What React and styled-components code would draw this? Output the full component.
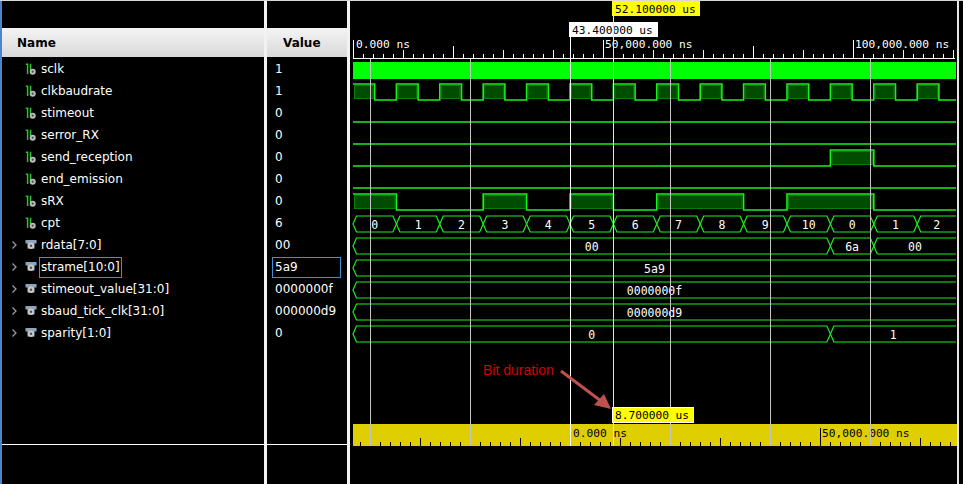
import React from 'react';
import styled, { createGlobalStyle } from 'styled-components';

const GlobalStyle = createGlobalStyle`
  html, body {
    margin: 0;
    padding: 0;
    background: #000;
  }
`;

const Page = styled.div`
  display: flex;
  width: 963px;
  height: 484px;
  background: #000;
  border-top: 1px solid #d8d8d8;
  box-sizing: border-box;
  overflow: hidden;
  font-family: "DejaVu Sans", sans-serif;
  font-size: 12px;
  color: #fff;
`;

const Column = styled.div`
  display: flex;
  flex-direction: column;
  width: ${p => p.$width}px;
  flex: none;
  box-sizing: border-box;
  border-left: ${p => (p.$edge ? '2px solid #4a86c8' : 'none')};
`;

const Divider = styled.div`
  width: ${p => p.$width}px;
  flex: none;
  background: #f2f2f2;
`;

const TopGap = styled.div`
  height: 27px;
  flex: none;
`;

const Header = styled.div`
  height: 29px;
  flex: none;
  display: flex;
  align-items: center;
  padding-left: ${p => p.$pad}px;
  background: linear-gradient(#f4f4f4, #d9d9d9);
  color: #000;
  font-weight: bold;
  font-size: 12px;
`;

const Rows = styled.div`
  flex: 1;
  padding-top: 1px;
`;

const Footer = styled.div`
  height: 39px;
  flex: none;
  border-top: 1px solid #fff;
`;

const NameRow = styled.div`
  height: 22px;
  display: flex;
  align-items: center;
  padding-left: 9px;
`;

const Chevron = styled.span`
  width: 14px;
  flex: none;
  display: flex;
  align-items: center;
`;

const IconBox = styled.span`
  width: 15px;
  flex: none;
  display: flex;
  align-items: center;
`;

const Label = styled.span`
  height: 21px;
  line-height: 19px;
  box-sizing: border-box;
  padding: 0 1px;
  margin-left: -1px;
  border: 1px solid ${p => (p.$selected ? '#3f8ed6' : 'transparent')};
  white-space: nowrap;
`;

const ValueRow = styled.div`
  height: 22px;
  display: flex;
  align-items: center;
  padding: 0 6px 0 5px;
`;

const ValueText = styled.span`
  flex: 1;
  height: 21px;
  line-height: 19px;
  box-sizing: border-box;
  padding-left: 2px;
  border: 1px solid ${p => (p.$selected ? '#3f8ed6' : 'transparent')};
`;

const WavePanel = styled.div`
  flex: 1;
  position: relative;
`;

const signals = [
  { name: 'sclk', value: '1' },
  { name: 'clkbaudrate', value: '1' },
  { name: 'stimeout', value: '0' },
  { name: 'serror_RX', value: '0' },
  { name: 'send_reception', value: '0' },
  { name: 'end_emission', value: '0' },
  { name: 'sRX', value: '0' },
  { name: 'cpt', value: '6' },
  { name: 'rdata[7:0]', value: '00', bus: true },
  { name: 'strame[10:0]', value: '5a9', bus: true, selected: true },
  { name: 'stimeout_value[31:0]', value: '0000000f', bus: true },
  { name: 'sbaud_tick_clk[31:0]', value: '000000d9', bus: true },
  { name: 'sparity[1:0]', value: '0', bus: true },
];

function BitIcon() {
  return (
    <svg width="11" height="12" viewBox="0 0 11 12">
      <path d="M0.8 1.2 H2.6 V11 M5.6 0.8 V7" stroke="#2fc22f" strokeWidth="1.5" fill="none" />
      <circle cx="7.7" cy="8.7" r="3" fill="#bdbdbd" />
      <circle cx="7.7" cy="8.7" r="1.1" fill="#4a4a4a" />
    </svg>
  );
}

function BusIcon() {
  return (
    <svg width="12" height="12" viewBox="0 0 12 12">
      <path d="M0.5 1 H11.5 V4.5 H9.5 V9.5 H2.5 V4.5 H0.5 Z" fill="#8ea4ba" />
      <circle cx="6" cy="6.8" r="3.2" fill="#c8c8c8" />
      <circle cx="6" cy="6.8" r="1.2" fill="#505050" />
    </svg>
  );
}

function Arrow() {
  return (
    <svg width="7" height="10" viewBox="0 0 7 10">
      <path d="M1.5 1.5 L5 5 L1.5 8.5" stroke="#9a9a9a" strokeWidth="1.3" fill="none" />
    </svg>
  );
}

// waveform geometry, in page pixels
const X0 = 353;
const XE = 956;
const P = 43.4;
const ROW0 = 57;
const edge = k => X0 + k * P;
const GREEN = '#1cf01c';
const MONO = '"DejaVu Sans Mono", monospace';

function Scalar({ row, highs }) {
  const top = ROW0 + row * 22 + 4;
  const low = top + 16;
  let d = '';
  const segs = highs.map(([a, b]) => [edge(a), Math.min(edge(b), XE)]);
  segs.forEach(([a, b], i) => {
    if (i === 0 && a <= X0) {
      d = `M${X0} ${top}`;
    } else {
      if (!d) d = `M${X0} ${low}`;
      d += ` H${a} V${top}`;
    }
    d += ` H${b} V${low}`;
  });
  if (!d) d = `M${X0} ${low}`;
  d += ` H${XE}`;
  return (
    <g>
      {segs.map(([a, b], i) => (
        <rect key={i} x={a + 1.5} y={top + 1.5} width={b - a - 3} height={low - top - 3}
          fill="#004d00" stroke="#0b7d0b" strokeWidth="1" />
      ))}
      <path d={d} stroke={GREEN} strokeWidth="1.6" fill="none" />
    </g>
  );
}

function Bus({ row, segs }) {
  const top = ROW0 + row * 22 + 4;
  const bot = top + 16;
  const mid = (top + bot) / 2;
  const s = 3.5;
  return (
    <g>
      {segs.map(([a, b, v], i) => {
        const xa = edge(a);
        const open = b === null;
        const xb = open ? XE : edge(b);
        const pts = open
          ? `M${XE} ${top} H${xa + s} L${xa} ${mid} L${xa + s} ${bot} H${XE}`
          : `M${xa} ${mid} L${xa + s} ${top} H${xb - s} L${xb} ${mid} L${xb - s} ${bot} H${xa + s} Z`;
        return (
          <g key={i}>
            <path d={pts} stroke={GREEN} strokeWidth="1.2" fill="none" />
            <text x={(xa + xb) / 2} y={top + 12.5} fill="#fff" fontFamily={MONO} fontSize="11.5" textAnchor="middle">{v}</text>
          </g>
        );
      })}
    </g>
  );
}

function Waves() {
  const topTicks = [];
  for (let k = 0; k <= 60; k++) {
    const x = X0 + k * 10;
    let h = 4;
    if (k % 25 === 0) h = 18;
    else if (x === 453 || x === 753) h = 12;
    else if (k % 5 === 0) h = 8;
    topTicks.push(<line key={k} x1={x + 0.5} x2={x + 0.5} y1={57 - h} y2={57} stroke="#fff" strokeWidth="1" />);
  }
  const botTicks = [];
  for (let x = 360; x <= 950; x += 10) {
    const r = x - 570;
    let h = 4;
    if (r % 250 === 0) h = 18;
    else if (r % 50 === 0) h = 8;
    botTicks.push(<line key={x} x1={x + 0.5} x2={x + 0.5} y1={445 - h} y2={445} stroke="#000" strokeWidth="1" />);
  }
  const cptVals = ['0', '1', '2', '3', '4', '5', '6', '7', '8', '9', '10', '0', '1', '2'];
  const cptSegs = cptVals.map((v, i) => [i, i === 13 ? null : i + 1, v]);
  const grid = [370, 470, 670, 770, 870];
  return (
    <svg width="613" height="483" viewBox="350 0 613 483" style={{ display: 'block' }}>
      {/* top ruler */}
      <rect x="612" y="0" width="88" height="15" fill="#ffff00" />
      <text x="615" y="12" fontFamily={MONO} fontSize="11.2" fill="#000">52.100000 us</text>
      <rect x="569" y="21" width="89" height="15" fill="#fff" />
      <text x="572" y="33" fontFamily={MONO} fontSize="11.2" fill="#000">43.400000 us</text>
      <text x="356" y="47" fontFamily={MONO} fontSize="11.2" fill="#fff">0.000 ns</text>
      <text x="605" y="47" fontFamily={MONO} fontSize="11.2" fill="#fff">50,000.000 ns</text>
      <text x="855" y="47" fontFamily={MONO} fontSize="11.2" fill="#fff">100,000.000 ns</text>
      <line x1={X0} x2="955" y1="57.5" y2="57.5" stroke="#fff" strokeWidth="1" />
      {topTicks}

      {/* signals */}
      <rect x={X0} y="61" width={XE - X0} height="17" fill="#00ff00" />
      <Scalar row={1} highs={Array.from({ length: 14 }, (_, i) => [i, i + 0.5])} />
      <Scalar row={2} highs={[]} />
      <Scalar row={3} highs={[]} />
      <Scalar row={4} highs={[[11, 12]]} />
      <Scalar row={5} highs={[]} />
      <Scalar row={6} highs={[[0, 1], [3, 4], [5, 6], [7, 9], [10, 12]]} />
      <Bus row={7} segs={cptSegs} />
      <Bus row={8} segs={[[0, 11, '00'], [11, 12, '6a'], [12, null, '00']]} />
      <Bus row={9} segs={[[0, null, '5a9']]} />
      <Bus row={10} segs={[[0, null, '0000000f']]} />
      <Bus row={11} segs={[[0, null, '000000d9']]} />
      <Bus row={12} segs={[[0, 11, '0'], [11, null, '1']]} />

      {/* bottom ruler */}
      <rect x={X0} y="423" width={957 - X0} height="22" fill="#dfcf00" />
      {botTicks}
      <text x="573" y="436" fontFamily={MONO} fontSize="11.2" fill="#000">0.000 ns</text>
      <text x="822" y="436" fontFamily={MONO} fontSize="11.2" fill="#000">50,000.000 ns</text>

      {/* grid and cursors */}
      {grid.map(x => (
        <line key={x} x1={x + 0.5} x2={x + 0.5} y1="58" y2="445" stroke="#c4c4c4" strokeWidth="1" />
      ))}
      <line x1="570.5" x2="570.5" y1="36" y2="445" stroke="#fff" strokeWidth="1" />
      <line x1="613.5" x2="613.5" y1="15" y2="445" stroke="#ffff00" strokeWidth="1" />

      {/* annotation */}
      <text x="483" y="374" fontFamily={'"Liberation Sans", Arial, sans-serif'} fontSize="14" fill="#d40000">Bit duration</text>
      <line x1="561" y1="370" x2="601" y2="400" stroke="#c0504d" strokeWidth="3" />
      <path d="M611 408 L594 404 L604 393 Z" fill="#c0504d" />
      <rect x="612.5" y="406.5" width="81" height="15" fill="#ffff00" stroke="#fff" strokeWidth="1" />
      <text x="615" y="418" fontFamily={MONO} fontSize="11.2" fill="#000">8.700000 us</text>

      <line x1="958" x2="958" y1="0" y2="483" stroke="#e6e6e6" strokeWidth="2" />
    </svg>
  );
}

export default function App() {
  return (
    <>
      <GlobalStyle />
      <Page>
        <Column $width={264} $edge>
          <TopGap />
          <Header $pad={15}>Name</Header>
          <Rows>
            {signals.map(s => (
              <NameRow key={s.name}>
                <Chevron>{s.bus && <Arrow />}</Chevron>
                <IconBox>{s.bus ? <BusIcon /> : <BitIcon />}</IconBox>
                <Label $selected={s.selected}>{s.name}</Label>
              </NameRow>
            ))}
          </Rows>
          <Footer />
        </Column>
        <Divider $width={3} />
        <Column $width={80}>
          <TopGap />
          <Header $pad={16}>Value</Header>
          <Rows>
            {signals.map(s => (
              <ValueRow key={s.name}>
                <ValueText $selected={s.selected}>{s.value}</ValueText>
              </ValueRow>
            ))}
          </Rows>
          <Footer />
        </Column>
        <Divider $width={3} />
        <WavePanel>
          <Waves />
        </WavePanel>
      </Page>
    </>
  );
}
